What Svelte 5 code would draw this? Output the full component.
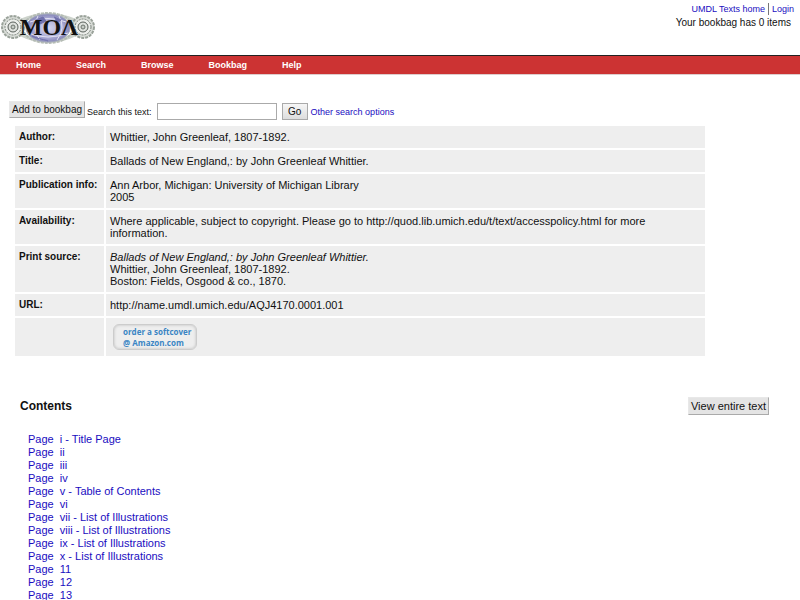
<script lang="ts">
	const navLinks = ['Home', 'Search', 'Browse', 'Bookbag', 'Help'];

	// One entry per row of the bibliographic record.
	const record = [
		{ label: 'Author:', lines: ['Whittier, John Greenleaf, 1807-1892.'] },
		{ label: 'Title:', lines: ['Ballads of New England,: by John Greenleaf Whittier.'] },
		{ label: 'Publication info:', lines: ['Ann Arbor, Michigan: University of Michigan Library', '2005'] },
		{
			label: 'Availability:',
			lines: [
				'Where applicable, subject to copyright. Please go to http://quod.lib.umich.edu/t/text/accesspolicy.html for more information.'
			]
		},
		{
			label: 'Print source:',
			title: 'Ballads of New England,: by John Greenleaf Whittier.',
			lines: ['Whittier, John Greenleaf, 1807-1892.', 'Boston: Fields, Osgood & co., 1870.']
		},
		{ label: 'URL:', lines: ['http://name.umdl.umich.edu/AQJ4170.0001.001'] }
	];

	const pages = [
		'i - Title Page',
		'ii',
		'iii',
		'iv',
		'v - Table of Contents',
		'vi',
		'vii - List of Illustrations',
		'viii - List of Illustrations',
		'ix - List of Illustrations',
		'x - List of Illustrations',
		'11',
		'12',
		'13'
	];

	let query = $state('');
</script>

{#snippet gear(cx: number)}
	<g transform="translate({cx} 16)">
		<circle r="11" fill="#d9ddd8" stroke="#9aa29a" stroke-width="2" stroke-dasharray="3 1" />
		<circle r="8" fill="#eceeeb" stroke="#7b837c" stroke-dasharray="2 1" />
		<circle r="5" fill="#dfe2de" stroke="#59605a" />
		<circle r="2" fill="#c6cbc6" stroke="#6b736c" />
	</g>
{/snippet}

<header class="top">
	<a class="logo" href="#home" aria-label="MOA">
		<svg width="96" height="34" viewBox="0 0 96 34">
			<defs>
				<radialGradient id="globe">
					<stop offset="0" stop-color="#d6d6ee" />
					<stop offset="0.7" stop-color="#a9a9d4" />
					<stop offset="1" stop-color="#8585b8" />
				</radialGradient>
			</defs>
			<path d="M20 10q28-12 56 0M20 23q28 14 56 0" fill="none" stroke="#cdd3cc" stroke-width="4" />
			{@render gear(13)}
			{@render gear(83)}
			<ellipse cx="48" cy="17" rx="25" ry="15" fill="none" stroke="#b4bbb4" stroke-width="2" stroke-dasharray="3 1" />
			<ellipse cx="48" cy="17" rx="22" ry="14" fill="url(#globe)" stroke="#a0a6bc" />
			<path d="M30 11q18-7 36 0M28 22q20 8 40 0M38 5q-7 12 2 24M59 5q7 12-2 24" fill="none" stroke="#e2e2f3" />
			<path d="M32 25c8 4 12 3 16 5M54 6l7 3-4 3M36 9l7-3 3 4-6 3z" fill="#7070ac" stroke="#7070ac" />
			<text x="49" y="24" text-anchor="middle" class="logo-text">MOΛ</text>
		</svg>
	</a>
	<div class="account">
		<p class="account-links"><a href="#texts">UMDL Texts home</a><span class="bar"></span><a href="#login">Login</a></p>
		<p class="bag">Your bookbag has 0 items</p>
	</div>
</header>

<nav>
	{#each navLinks as link}
		<a href="#{link.toLowerCase()}">{link}</a>
	{/each}
</nav>

<main>
	<form class="tools" onsubmit={(e) => e.preventDefault()}>
		<button type="button" class="flat">Add to bookbag</button>
		<label for="q">Search this text:</label>
		<input id="q" type="text" bind:value={query} />
		<button type="submit" class="go">Go</button>
		<a href="#options">Other search options</a>
	</form>

	<table>
		<tbody>
			{#each record as row}
				<tr>
					<th scope="row">{row.label}</th>
					<td>
						{#if row.title}<cite>{row.title}</cite>{/if}
						{#each row.lines as line}<div>{line}</div>{/each}
					</td>
				</tr>
			{/each}
			<tr>
				<th></th>
				<td class="order-cell"><a class="order" href="#order">order a softcover<br />@ Amazon.com</a></td>
			</tr>
		</tbody>
	</table>

	<div class="contents-head">
		<h2>Contents</h2>
		<button type="button" class="flat">View entire text</button>
	</div>

	<ul>
		{#each pages as page}
			<li><a href="#page">Page&nbsp; {page}</a></li>
		{/each}
	</ul>
</main>

<style>
	:global(body) { background: #fff; color: #111; font: 11px/12px "Liberation Sans", Arial, sans-serif; }
	a { color: #1a0dbf; text-decoration: none; }
	p, h2, ul { margin: 0; padding: 0; }

	.top { display: flex; justify-content: space-between; height: 55px; box-sizing: border-box; padding: 0 6px 0 0; }
	.logo { display: block; padding-top: 11px; }
	.logo svg { display: block; }
	.logo-text { font: bold 24px "Liberation Serif", serif; fill: #111; }
	.account { padding-top: 3px; text-align: right; }
	.account-links { display: flex; justify-content: flex-end; gap: 3px; font-size: 9px; line-height: 12px; }
	.bar { width: 1px; background: #777; }
	.bag { padding-right: 3px; font-size: 10px; line-height: 15px; }

	nav { display: flex; gap: 35px; padding: 0 16px; background: #c33; border-top: 1px solid #222; border-bottom: 1px solid #dcc; }
	nav a { color: #fff; font-size: 9px; font-weight: bold; line-height: 18px; }

	main { padding: 26px 0 0; }
	.tools { display: flex; align-items: center; margin-left: 9px; font-size: 9px; }
	.flat { padding: 0 2px; background: #e4e4e4; border: 1px solid; border-color: #e8e8e8 #aaa #aaa #e8e8e8; color: #111; font: 11px/16px "Liberation Sans", Arial, sans-serif; }
	.tools .flat { margin-bottom: 4px; font-size: 10px; line-height: 15px; }
	label { margin: 0 5px 0 2px; }
	input { width: 120px; height: 17px; box-sizing: border-box; padding: 0 2px; border: 1px solid #aaa; font: inherit; }
	.go { margin: 0 3px 0 5px; width: 26px; height: 17px; padding: 0; background: linear-gradient(#f6f6f6, #ddd); border: 1px solid #aaa; color: #111; font: 10px "Liberation Sans", Arial, sans-serif; }

	table { width: calc(100% - 106px); margin: 2px 0 0 13px; border-spacing: 2px; }
	th, td { padding: 5px 4px; background: #eee; text-align: left; vertical-align: top; }
	th { width: 81px; font-size: 10px; white-space: nowrap; }
	cite { display: block; }
	.order-cell { padding: 6px 7px; }
	.order { display: block; width: 84px; box-sizing: border-box; padding: 1px 0 1px 9px; border: 1px solid #ccc; border-radius: 6px; background: #eee; box-shadow: inset 0 0 3px #bbb; color: #3a85c4; font: bold 8px/11px "Open Sans", sans-serif; white-space: nowrap; }

	.contents-head { display: flex; align-items: center; justify-content: space-between; margin: 39px 31px 0 20px; }
	h2 { font-size: 12px; }
	ul { margin: 18px 0 0 28px; list-style: none; }
	li { font-size: 11px; line-height: 13px; }
</style>
